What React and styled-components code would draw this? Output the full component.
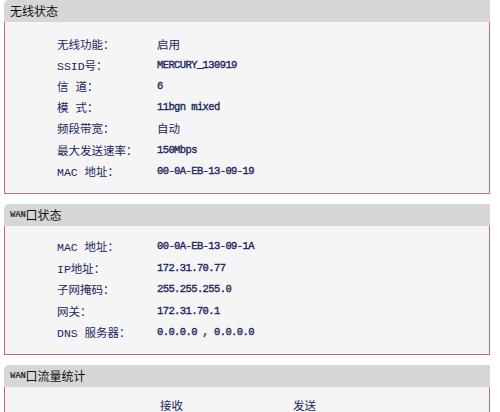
import React from "react";
import styled, { createGlobalStyle } from "styled-components";

const wireless = [
    ["无线功能：", "启用", false],
    ["SSID号：", "MERCURY_130919", true],
    ["信 道：", "6", true],
    ["模 式：", "11bgn mixed", true],
    ["频段带宽：", "自动", false],
    ["最大发送速率：", "150Mbps", true],
    ["MAC 地址：", "00-0A-EB-13-09-19", true],
];

const wan = [
    ["MAC 地址：", "00-0A-EB-13-09-1A"],
    ["IP地址：", "172.31.70.77"],
    ["子网掩码：", "255.255.255.0"],
    ["网关：", "172.31.70.1"],
    ["DNS 服务器：", "0.0.0.0 , 0.0.0.0"],
];

const App = () => {
    return (
        <>
            <GlobalStyle />
            <Page>
                <Section>
                    <Header>无线状态</Header>
                    <Body $pt="11px" $pb="12px" $pitch="21.2px">
                        {wireless.map(([label, value, mono]) => (
                            <Row key={label}>
                                <Label>{label}</Label>
                                <Value $mono={mono}>{value}</Value>
                            </Row>
                        ))}
                    </Body>
                </Section>

                <Section>
                    <Header><Small>WAN</Small>口状态</Header>
                    <Body $pt="9px" $pb="11px" $pitch="21.5px">
                        {wan.map(([label, value]) => (
                            <Row key={label}>
                                <Label>{label}</Label>
                                <Value $mono>{value}</Value>
                            </Row>
                        ))}
                    </Body>
                </Section>

                <Section>
                    <Header><Small>WAN</Small>口流量统计</Header>
                    <Body $pt="8px" $pb="20px" $pitch="21px">
                        <TrafficRow>
                            <span />
                            <ColHead>接收</ColHead>
                            <ColHead>发送</ColHead>
                        </TrafficRow>
                    </Body>
                </Section>
            </Page>
        </>
    );
};

const GlobalStyle = createGlobalStyle`
  body {
    margin: 0;
    background: #ffffff;
    font-family: "Noto Sans CJK SC", "DejaVu Sans", sans-serif;
  }
`;

const Page = styled.div`
  width: 500px;
  padding: 0 10px 0 4px;
  box-sizing: border-box;
  display: flex;
  flex-direction: column;
  gap: 10px;
`;

const Section = styled.section`
  display: flex;
  flex-direction: column;
`;

const Header = styled.div`
  height: 22px;
  line-height: 22px;
  background: #d6d6d6;
  border-radius: 5px 0 0 0;
  padding-left: 6px;
  font-size: 12px;
  color: #111111;
  display: flex;
  align-items: center;
`;

const Small = styled.span`
  font-family: "Liberation Mono", monospace;
  font-size: 9px;
  font-weight: bold;
  letter-spacing: -0.2px;
  color: #333;
`;

const Body = styled.div`
  background: #f5f5f5;
  border: 1px solid #c46c68;
  border-top: none;
  padding: ${(p) => p.$pt} 0 ${(p) => p.$pb} 52px;
  display: grid;
  grid-auto-rows: ${(p) => p.$pitch};
  align-items: center;
`;

const Row = styled.div`
  display: grid;
  grid-template-columns: 100px 1fr;
  align-items: center;
  color: #1b2660;
`;

const Label = styled.span`
  font-family: "Liberation Mono", "Noto Sans CJK SC", monospace;
  font-size: 11.5px;
`;

const Value = styled.span`
  font-family: ${(p) => (p.$mono ? `"Liberation Mono", monospace` : `"Noto Sans CJK SC", sans-serif`)};
  font-size: ${(p) => (p.$mono ? "10.5px" : "11.5px")};
  letter-spacing: ${(p) => (p.$mono ? "-0.6px" : "0")};
  -webkit-text-stroke: ${(p) => (p.$mono ? "0.35px" : "0")};
`;

const TrafficRow = styled.div`
  display: grid;
  grid-template-columns: 103px 133px 1fr;
  align-items: center;
  color: #1b2660;
`;

const ColHead = styled.span`
  font-size: 11.5px;
`;

export default App;
